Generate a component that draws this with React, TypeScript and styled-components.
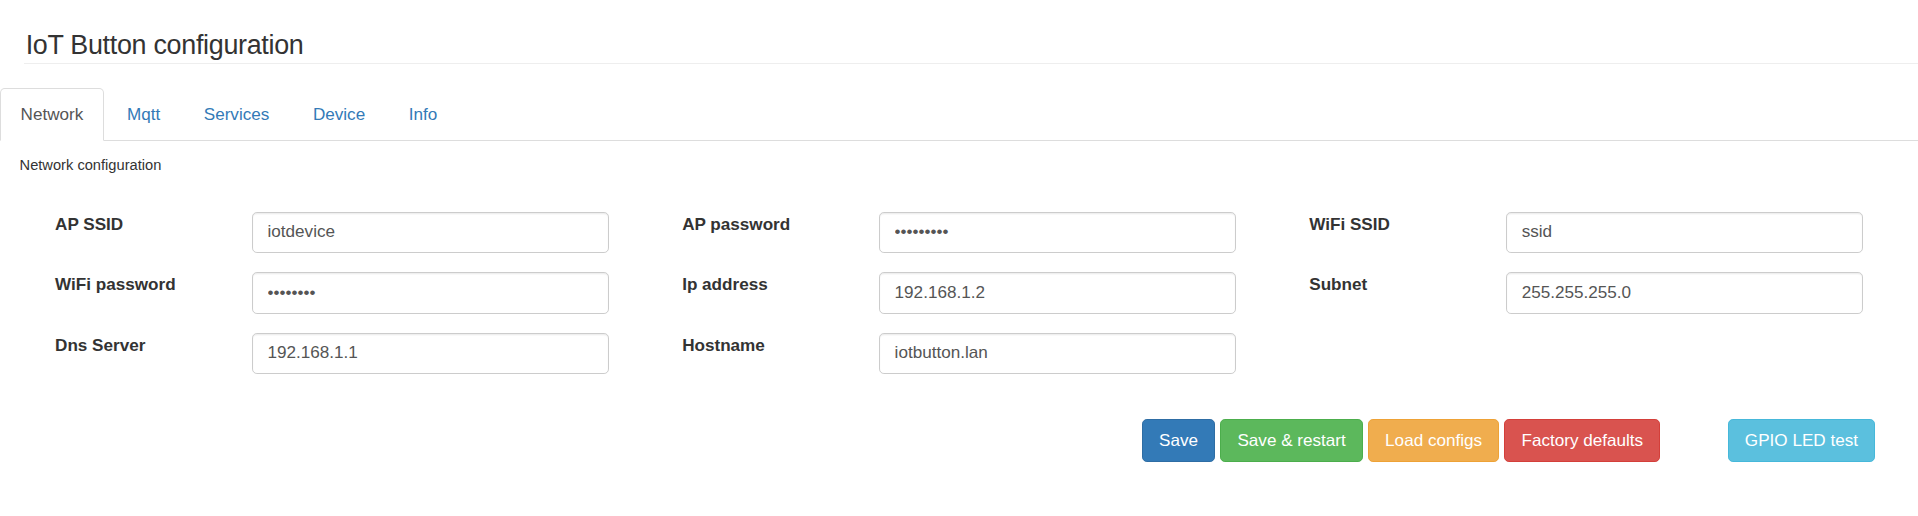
import React from "react";
import styled, { createGlobalStyle } from "styled-components";

const GlobalStyle = createGlobalStyle`
  html, body {
    margin: 0;
    padding: 0;
    background: #ffffff;
  }
  body {
    font-family: "Liberation Sans", Arial, Helvetica, sans-serif;
    font-size: 14px;
    line-height: 1.42857;
    color: #333333;
  }
  * { box-sizing: border-box; }
`;

const Page = styled.div`
  zoom: 1.2232;
  width: 100%;
  padding-bottom: 40px;
`;

const Header = styled.div`
  margin: 25px 0 20px 20px;
  padding-bottom: 2px;
  border-bottom: 1px solid #eeeeee;
`;

const Title = styled.h1`
  margin: 0;
  padding-left: 1px;
  font-size: 22px;
  font-weight: 400;
  line-height: 1.1;
  letter-spacing: -0.25px;
  color: #333333;
`;

const TabBar = styled.ul`
  display: flex;
  list-style: none;
  margin: 0;
  padding: 0;
  border-bottom: 1px solid #dddddd;
`;

const Tab = styled.li<{ $active?: boolean }>`
  margin: 0 2px -1px 0;
  padding: 11px 16px 10.5px;
  line-height: 20px;
  font-size: 14px;
  border: 1px solid transparent;
  border-radius: 4px 4px 0 0;
  color: ${(p) => (p.$active ? "#555555" : "#337ab7")};
  background: ${(p) => (p.$active ? "#ffffff" : "transparent")};
  border-color: ${(p) => (p.$active ? "#dddddd #dddddd transparent" : "transparent")};
  cursor: pointer;
`;

const Pane = styled.div`
  padding: 12px 15px 0;
`;

const SectionTitle = styled.div`
  padding-left: 1px;
  font-size: 12px;
  line-height: 17px;
  color: #333333;
  margin-bottom: 29px;
`;

const FormGrid = styled.div`
  display: grid;
  grid-template-columns: repeat(3, 1fr);
  row-gap: 15.5px;
`;

const FormGroup = styled.div`
  display: flex;
  padding: 0 15px;
  min-width: 0;
`;

const Label = styled.label`
  flex: 0 0 33.3333%;
  padding: 1px 15px 0;
  font-weight: 700;
  font-size: 14px;
  line-height: 20px;
  color: #333333;
`;

const Field = styled.div`
  flex: 0 0 66.6667%;
  padding: 0 15px;
`;

const Input = styled.input`
  display: block;
  width: 100%;
  height: 34px;
  padding: 6px 12px;
  font-family: "Liberation Sans", Arial, Helvetica, sans-serif;
  font-size: 14px;
  line-height: 1.42857;
  color: #555555;
  background: #ffffff;
  border: 1px solid #cccccc;
  border-radius: 4px;
  box-shadow: inset 0 1px 1px rgba(0, 0, 0, 0.075);
  outline: none;
`;

const ButtonBar = styled.div`
  display: flex;
  justify-content: flex-end;
  align-items: center;
  gap: 4px;
  margin-top: 37px;
  padding-right: 20px;
`;

const variants: Record<string, { bg: string; border: string }> = {
  primary: { bg: "#337ab7", border: "#2e6da4" },
  success: { bg: "#5cb85c", border: "#4cae4c" },
  warning: { bg: "#f0ad4e", border: "#eea236" },
  danger: { bg: "#d9534f", border: "#d43f3a" },
  info: { bg: "#5bc0de", border: "#46b8da" },
};

const Button = styled.button<{ $variant: string; $spaced?: boolean }>`
  display: inline-block;
  height: 35px;
  padding: 6px 13.25px;
  margin-left: ${(p) => (p.$spaced ? "51px" : "0")};
  font-family: "Liberation Sans", Arial, Helvetica, sans-serif;
  font-size: 14px;
  line-height: 20px;
  color: #ffffff;
  white-space: nowrap;
  background: ${(p) => variants[p.$variant].bg};
  border: 1px solid ${(p) => variants[p.$variant].border};
  border-radius: 4px;
  cursor: pointer;
`;

type FieldDef = { label: string; value: string; password?: boolean };

const fields: FieldDef[] = [
  { label: "AP SSID", value: "iotdevice" },
  { label: "AP password", value: "123456789", password: true },
  { label: "WiFi SSID", value: "ssid" },
  { label: "WiFi password", value: "12345678", password: true },
  { label: "Ip address", value: "192.168.1.2" },
  { label: "Subnet", value: "255.255.255.0" },
  { label: "Dns Server", value: "192.168.1.1" },
  { label: "Hostname", value: "iotbutton.lan" },
];

const tabs = ["Network", "Mqtt", "Services", "Device", "Info"];

export default function App() {
  return (
    <>
      <GlobalStyle />
      <Page>
        <Header>
          <Title>IoT Button configuration</Title>
        </Header>
        <TabBar>
          {tabs.map((t, i) => (
            <Tab key={t} $active={i === 0}>
              {t}
            </Tab>
          ))}
        </TabBar>
        <Pane>
          <SectionTitle>Network configuration</SectionTitle>
          <FormGrid>
            {fields.map((f) => (
              <FormGroup key={f.label}>
                <Label>{f.label}</Label>
                <Field>
                  <Input
                    type={f.password ? "password" : "text"}
                    defaultValue={f.value}
                    readOnly
                  />
                </Field>
              </FormGroup>
            ))}
          </FormGrid>
          <ButtonBar>
            <Button $variant="primary">Save</Button>
            <Button $variant="success">Save &amp; restart</Button>
            <Button $variant="warning">Load configs</Button>
            <Button $variant="danger">Factory defaults</Button>
            <Button $variant="info" $spaced>
              GPIO LED test
            </Button>
          </ButtonBar>
        </Pane>
      </Page>
    </>
  );
}
